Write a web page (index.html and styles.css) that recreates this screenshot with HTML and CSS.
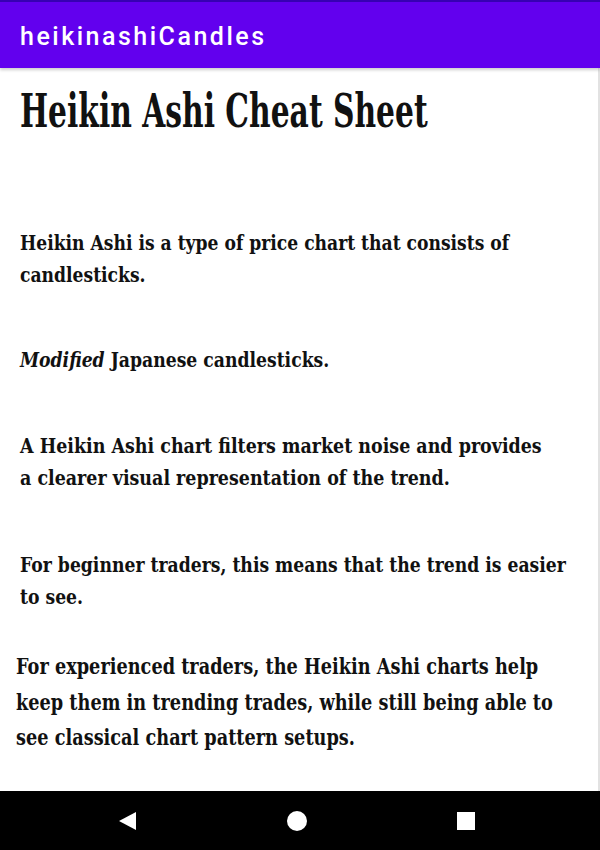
FILE: index.html
```html
<!DOCTYPE html>
<html>
<head>
<meta charset="utf-8">
<link rel="stylesheet" href="styles.css">
</head>
<body>
<div class="screen">
  <header class="appbar"><span class="appbar-title">heikinashiCandles</span></header>
  <main class="content">
    <h1 class="title"><span class="squeeze sq-title">Heikin Ashi Cheat Sheet</span></h1>
    <p class="para p1"><span class="squeeze sq1">Heikin Ashi is a type of price chart that consists of<br>candlesticks.</span></p>
    <p class="para p2"><span class="squeeze sq2"><em>Modified</em> Japanese candlesticks.</span></p>
    <p class="para p3"><span class="squeeze sq3">A Heikin Ashi chart filters market noise and provides<br>a clearer visual representation of the trend.</span></p>
    <p class="para p4"><span class="squeeze sq4">For beginner traders, this means that the trend is easier<br>to see.</span></p>
    <p class="para p5"><span class="squeeze sq5">For experienced traders, the Heikin Ashi charts help<br>keep them in trending trades, while still being able to<br>see classical chart pattern setups.</span></p>
  </main>
  <nav class="navbar">
    <svg class="nav-icon" width="20" height="20" viewBox="0 0 20 20"><polygon points="18,1 18,19 1,10" fill="#fff"/></svg>
    <svg class="nav-icon" width="20" height="20" viewBox="0 0 20 20"><circle cx="10" cy="10" r="10" fill="#fff"/></svg>
    <svg class="nav-icon" width="20" height="20" viewBox="0 0 20 20"><rect x="1" y="1" width="18" height="18" fill="#fff"/></svg>
  </nav>
</div>
</body>
</html>
```
FILE: styles.css
```css
html, body { margin: 0; padding: 0; }
body { width: 600px; height: 850px; overflow: hidden; background: #fff; }
.screen { display: flex; flex-direction: column; height: 850px; }
.appbar {
  height: 68px; flex: none; background: #6200ee; border-top: 2px solid #3700b3;
  box-sizing: border-box; display: flex; align-items: center; padding-left: 20px;
  box-shadow: 0 2px 3px rgba(0,0,0,0.2); position: relative; z-index: 1;
}
.appbar-title { color: #fff; font-family: Roboto, sans-serif; font-weight: 500; font-size: 25px; letter-spacing: 2.5px; margin-top: 2px; }
.content { flex: 1; padding: 0 20px; border-right: 2px solid #e2e2e2; color: #111; min-width: 0; }
.squeeze { display: inline-block; white-space: nowrap; transform-origin: 0 50%; width: 100%; }
.title {
  font-family: "DejaVu Serif", serif; font-weight: bold; font-size: 47px;
  margin: 17px 0 0; line-height: 52px;
}
.sq-title { transform: scaleX(0.633); }
.para {
  font-family: "DejaVu Serif", serif; font-weight: bold;
  font-size: 21px; line-height: 32px; margin: 0;
}
.sq1 { transform: scaleX(0.817); }
.sq2 { transform: scaleX(0.82); }
.sq3 { transform: scaleX(0.832); }
.sq4 { transform: scaleX(0.82); }
.sq5 { transform: scaleX(0.77); }
.p1 { margin-top: 90px; }
.p2 { margin-top: 53px; }
.p3 { margin-top: 54px; }
.p4 { margin-top: 55px; }
.p5 { margin-top: 35px; margin-left: -4px; font-size: 23px; line-height: 35.5px; }
.navbar {
  height: 59px; flex: none; background: #000; display: flex; align-items: center;
  justify-content: space-between; padding: 0 124px 0 118px; box-sizing: border-box;
}
```
